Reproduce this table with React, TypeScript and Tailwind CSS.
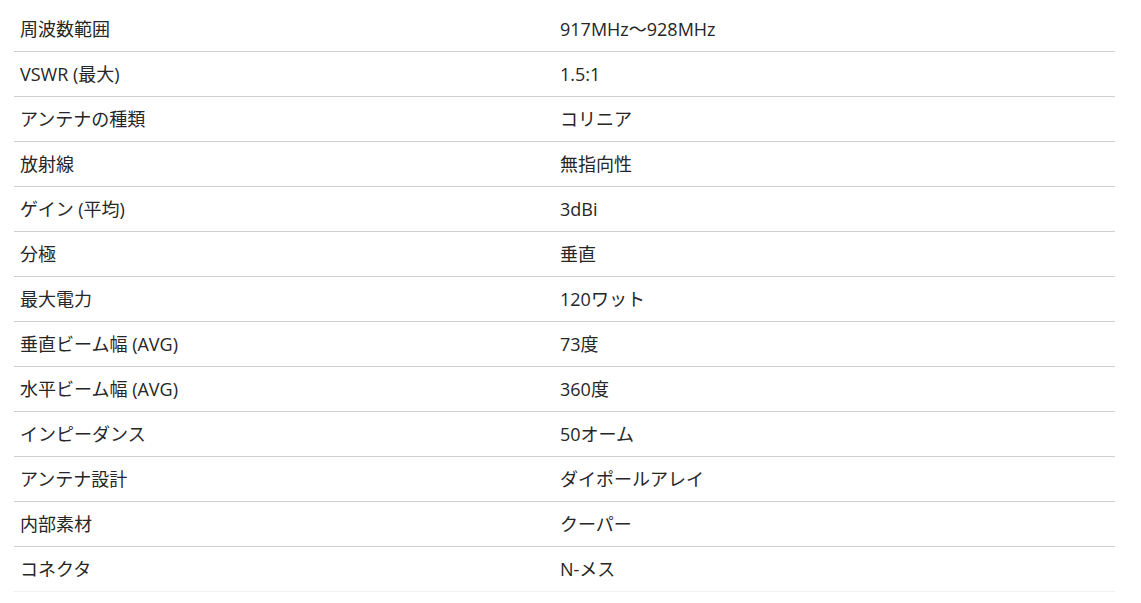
import React from "react";

const rows: [string, string][] = [
  ["周波数範囲", "917MHz～928MHz"],
  ["VSWR (最大)", "1.5:1"],
  ["アンテナの種類", "コリニア"],
  ["放射線", "無指向性"],
  ["ゲイン (平均)", "3dBi"],
  ["分極", "垂直"],
  ["最大電力", "120ワット"],
  ["垂直ビーム幅 (AVG)", "73度"],
  ["水平ビーム幅 (AVG)", "360度"],
  ["インピーダンス", "50オーム"],
  ["アンテナ設計", "ダイポールアレイ"],
  ["内部素材", "クーパー"],
  ["コネクタ", "N-メス"],
];

export default function App() {
  return (
    <div
      className="w-[1141px] h-[603px] bg-white overflow-hidden pt-[7px] pl-[14px] pr-[26px] text-[#262626] text-[18px]"
      style={{ fontFamily: '"Open Sans", "Noto Sans CJK JP", sans-serif' }}
    >
      <div className="flex flex-col">
        {rows.map(([k, v], i) => (
          <div
            key={i}
            className={`flex h-[45px] items-center border-b ${
              i === rows.length - 1 ? "border-[#efefef]" : "border-[#cfcfcf]"
            }`}
          >
            <div className="w-[540px] pl-[6px]">{k}</div>
            <div className="flex-1 pl-[6px]">{v}</div>
          </div>
        ))}
      </div>
    </div>
  );
}
